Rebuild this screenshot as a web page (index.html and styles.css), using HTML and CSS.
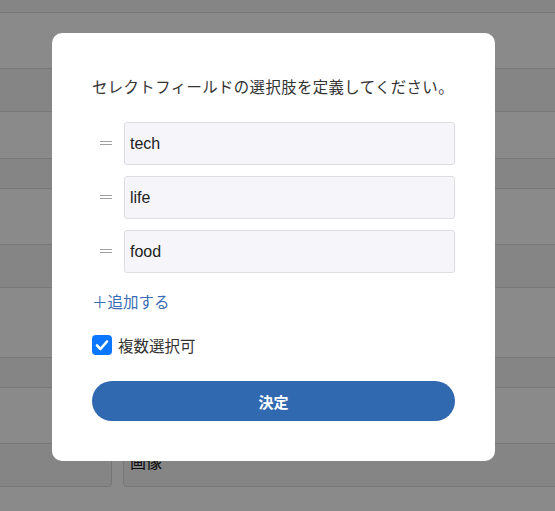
FILE: index.html
```html
<!DOCTYPE html>
<html lang="ja">

  <head>
    <meta charset="UTF-8">
    <meta name="viewport" content="width=device-width, initial-scale=1.0">
    <title>選択肢の定義</title>
    <link rel="stylesheet" href="styles.css">
  </head>

  <body>
    <div class="page">
      <div class="band band-top"></div>
      <div class="gap gap-55"></div>
      <div class="field-row"><div class="box"></div><div class="box"></div></div>
      <div class="gap gap-46"></div>
      <div class="band"></div>
      <div class="gap gap-55"></div>
      <div class="field-row"><div class="box"></div><div class="box"></div></div>
      <div class="gap gap-69"></div>
      <div class="band"></div>
      <div class="gap gap-55"></div>
      <div class="field-row"><div class="box"></div><div class="box">画像</div></div>
    </div>

    <div class="overlay">
      <div class="modal">
        <p class="modal-title">セレクトフィールドの選択肢を定義してください。</p>

        <ul class="options">
          <li class="option">
            <span class="handle"></span>
            <input class="option-input" type="text" value="tech">
          </li>
          <li class="option">
            <span class="handle"></span>
            <input class="option-input" type="text" value="life">
          </li>
          <li class="option">
            <span class="handle"></span>
            <input class="option-input" type="text" value="food">
          </li>
        </ul>

        <a class="add-link" href="#">＋追加する</a>

        <label class="multi">
          <span class="check">
            <svg width="20" height="20" viewBox="0 0 20 20">
              <path d="M5 10.5 L8.5 14 L15 6.5" fill="none" stroke="#fff" stroke-width="2.6" stroke-linecap="round" stroke-linejoin="round"/>
            </svg>
          </span>
          複数選択可
        </label>

        <button class="submit" type="button">決定</button>
      </div>
    </div>
  </body>

</html>
```

FILE: styles.css
```css
body {
  margin: 0;
  font-family: "Liberation Sans", "Noto Sans CJK JP", sans-serif;
  color: #222;
  background-color: #ffffff;
  overflow: hidden;
}

/* page behind the dialog */
.page {
  display: flex;
  flex-direction: column;
}

.band {
  height: 31px;
  background-color: #f5f5f7;
  border-top: 1px solid #dcdcdc;
  border-bottom: 1px solid #dcdcdc;
  box-sizing: border-box;
}

.band-top {
  height: 13px;
  border-top: none;
}

.gap-55 { height: 55px; }
.gap-46 { height: 46px; }
.gap-69 { height: 69px; }

.field-row {
  display: grid;
  grid-template-columns: 122px 1fr;
  gap: 11px;
  margin: 0 -10px;
}

.box {
  height: 44px;
  box-sizing: border-box;
  border: 1px solid #dcdcdc;
  border-radius: 4px;
  background-color: #f5f5f8;
  padding: 5px 6px;
  font-size: 16px;
  font-family: "Noto Sans CJK JP", sans-serif;
  line-height: 24px;
  color: #111;
}

/* dialog */
.overlay {
  position: fixed;
  inset: 0;
  background-color: rgba(0, 0, 0, 0.46);
  padding: 33px 0 0 52px;
}

.modal {
  width: 443px;
  box-sizing: border-box;
  padding: 40px;
  background-color: #fff;
  border-radius: 10px;
  display: flex;
  flex-direction: column;
}

.modal-title {
  margin: 0;
  font-family: "Noto Sans CJK JP", sans-serif;
  font-size: 15.4px;
  letter-spacing: 0.4px;
  line-height: 26px;
  white-space: nowrap;
  color: #333;
}

.options {
  list-style: none;
  margin: 23px 0 0;
  padding: 0;
  display: flex;
  flex-direction: column;
  gap: 11px;
}

.option {
  display: flex;
  align-items: center;
}

.handle {
  width: 32px;
  height: 6px;
  display: flex;
  justify-content: center;
}

.handle::before {
  content: "";
  width: 12px;
  height: 2px;
  margin-left: -5px;
  border-top: 1px solid #a0a0a0;
  border-bottom: 1px solid #a0a0a0;
}

.option-input {
  flex: 1;
  height: 43px;
  box-sizing: border-box;
  border: 1px solid #dddde2;
  border-radius: 3px;
  background-color: #f6f6fa;
  padding: 1px 5px 0;
  font-family: "Liberation Sans", sans-serif;
  font-size: 16px;
  color: #222;
}

.add-link {
  margin-top: 16px;
  font-family: "Noto Sans CJK JP", sans-serif;
  font-size: 15.5px;
  line-height: 24px;
  color: #3a6db3;
  text-decoration: none;
  align-self: flex-start;
}

.multi {
  margin-top: 22px;
  display: flex;
  align-items: center;
  gap: 6px;
  font-family: "Noto Sans CJK JP", sans-serif;
  font-size: 15.5px;
  line-height: 20px;
  color: #333;
}

.check {
  width: 20px;
  height: 20px;
  border-radius: 4px;
  background-color: #0b76ff;
  display: flex;
}

.submit {
  margin-top: 26px;
  height: 40px;
  border: none;
  border-radius: 20px;
  background-color: #3169b0;
  color: #fff;
  font-family: "Noto Sans CJK JP", sans-serif;
  font-size: 15px;
  font-weight: bold;
  cursor: pointer;
}
```
